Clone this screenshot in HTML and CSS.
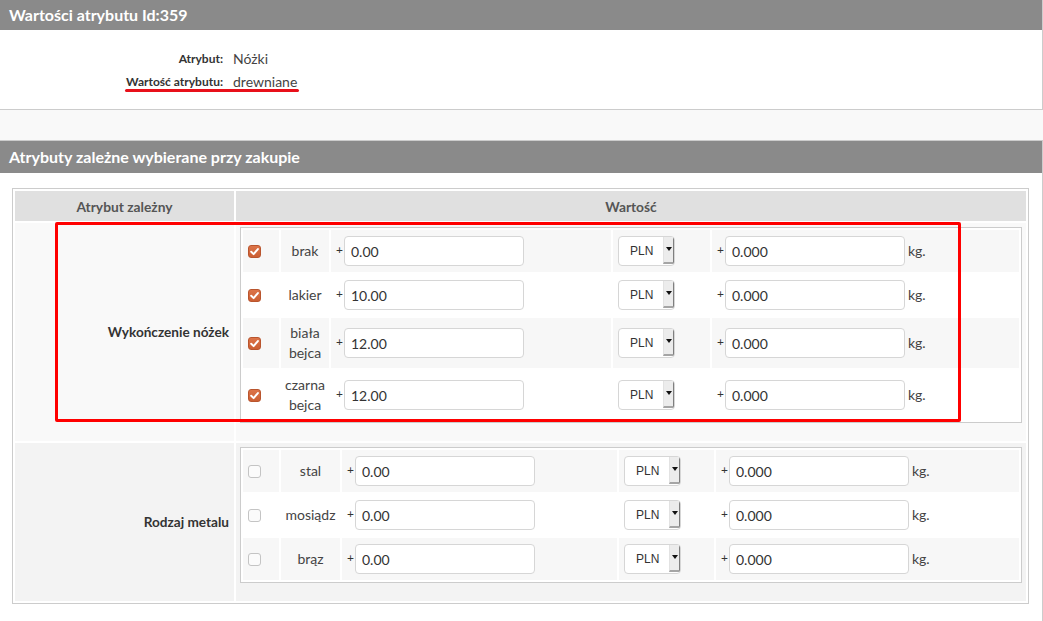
FILE: index.html
```html
<!DOCTYPE html>
<html lang="pl">
<head>
<meta charset="utf-8">
<title>Wartości atrybutu</title>
<link rel="stylesheet" href="styles.css">
</head>
<body>
<section class="panel panel-first">
  <h2 class="panel-head">Wartości atrybutu Id:359</h2>
  <div class="panel-body info">
    <div class="info-label">Atrybut:</div><div class="info-value">Nóżki</div>
    <div class="info-label">Wartość atrybutu:</div><div class="info-value">drewniane</div>
    <span class="mark-underline"></span>
  </div>
</section>

<section class="panel panel-second">
  <h2 class="panel-head panel-head-tall">Atrybuty zależne wybierane przy zakupie</h2>
  <div class="panel-body deps-wrap">
    <table class="deps">
      <colgroup><col class="col-name"><col></colgroup>
      <thead>
        <tr><th>Atrybut zależny</th><th>Wartość</th></tr>
      </thead>
      <tbody>
        <tr class="dep-row dep-row-a">
          <td class="dep-name">Wykończenie nóżek</td>
          <td class="dep-values">
            <table class="opts">
              <colgroup><col class="c-cb"><col class="c-lbl-a"><col class="c-price-a"><col class="c-sel-a"><col></colgroup>
              <tr>
                <td class="cell-cb"><span class="cb cb-on"><svg viewBox="0 0 13 13" width="13" height="13"><path d="M3.2 6.8 L5.6 9.1 L9.9 4.1" fill="none" stroke="#fff" stroke-width="2" stroke-linecap="round" stroke-linejoin="round"/></svg></span></td>
                <td class="cell-lbl">brak</td>
                <td><div class="fld"><span class="plus">+</span><input class="txt" type="text" value="0.00"></div></td>
                <td><div class="sel"><span class="sel-text">PLN</span><span class="sel-btn"><span class="tri"></span></span></div></td>
                <td><div class="fld"><span class="plus">+</span><input class="txt" type="text" value="0.000"><span class="unit">kg.</span></div></td>
              </tr>
              <tr>
                <td class="cell-cb"><span class="cb cb-on"><svg viewBox="0 0 13 13" width="13" height="13"><path d="M3.2 6.8 L5.6 9.1 L9.9 4.1" fill="none" stroke="#fff" stroke-width="2" stroke-linecap="round" stroke-linejoin="round"/></svg></span></td>
                <td class="cell-lbl">lakier</td>
                <td><div class="fld"><span class="plus">+</span><input class="txt" type="text" value="10.00"></div></td>
                <td><div class="sel"><span class="sel-text">PLN</span><span class="sel-btn"><span class="tri"></span></span></div></td>
                <td><div class="fld"><span class="plus">+</span><input class="txt" type="text" value="0.000"><span class="unit">kg.</span></div></td>
              </tr>
              <tr>
                <td class="cell-cb"><span class="cb cb-on"><svg viewBox="0 0 13 13" width="13" height="13"><path d="M3.2 6.8 L5.6 9.1 L9.9 4.1" fill="none" stroke="#fff" stroke-width="2" stroke-linecap="round" stroke-linejoin="round"/></svg></span></td>
                <td class="cell-lbl">biała bejca</td>
                <td><div class="fld"><span class="plus">+</span><input class="txt" type="text" value="12.00"></div></td>
                <td><div class="sel"><span class="sel-text">PLN</span><span class="sel-btn"><span class="tri"></span></span></div></td>
                <td><div class="fld"><span class="plus">+</span><input class="txt" type="text" value="0.000"><span class="unit">kg.</span></div></td>
              </tr>
              <tr>
                <td class="cell-cb"><span class="cb cb-on"><svg viewBox="0 0 13 13" width="13" height="13"><path d="M3.2 6.8 L5.6 9.1 L9.9 4.1" fill="none" stroke="#fff" stroke-width="2" stroke-linecap="round" stroke-linejoin="round"/></svg></span></td>
                <td class="cell-lbl">czarna bejca</td>
                <td><div class="fld"><span class="plus">+</span><input class="txt" type="text" value="12.00"></div></td>
                <td><div class="sel"><span class="sel-text">PLN</span><span class="sel-btn"><span class="tri"></span></span></div></td>
                <td><div class="fld"><span class="plus">+</span><input class="txt" type="text" value="0.000"><span class="unit">kg.</span></div></td>
              </tr>
            </table>
          </td>
        </tr>
        <tr class="dep-row dep-row-b">
          <td class="dep-name">Rodzaj metalu</td>
          <td class="dep-values">
            <table class="opts">
              <colgroup><col class="c-cb"><col class="c-lbl-b"><col class="c-price-b"><col class="c-sel-b"><col></colgroup>
              <tr>
                <td class="cell-cb"><span class="cb"></span></td>
                <td class="cell-lbl">stal</td>
                <td><div class="fld"><span class="plus">+</span><input class="txt" type="text" value="0.00"></div></td>
                <td><div class="sel"><span class="sel-text">PLN</span><span class="sel-btn"><span class="tri"></span></span></div></td>
                <td><div class="fld"><span class="plus">+</span><input class="txt" type="text" value="0.000"><span class="unit">kg.</span></div></td>
              </tr>
              <tr>
                <td class="cell-cb"><span class="cb"></span></td>
                <td class="cell-lbl">mosiądz</td>
                <td><div class="fld"><span class="plus">+</span><input class="txt" type="text" value="0.00"></div></td>
                <td><div class="sel"><span class="sel-text">PLN</span><span class="sel-btn"><span class="tri"></span></span></div></td>
                <td><div class="fld"><span class="plus">+</span><input class="txt" type="text" value="0.000"><span class="unit">kg.</span></div></td>
              </tr>
              <tr>
                <td class="cell-cb"><span class="cb"></span></td>
                <td class="cell-lbl">brąz</td>
                <td><div class="fld"><span class="plus">+</span><input class="txt" type="text" value="0.00"></div></td>
                <td><div class="sel"><span class="sel-text">PLN</span><span class="sel-btn"><span class="tri"></span></span></div></td>
                <td><div class="fld"><span class="plus">+</span><input class="txt" type="text" value="0.000"><span class="unit">kg.</span></div></td>
              </tr>
            </table>
          </td>
        </tr>
      </tbody>
    </table>
  </div>
  <span class="mark-box"></span>
</section>
</body>
</html>
```

FILE: styles.css
```css
* { box-sizing: border-box; }
html, body { margin: 0; padding: 0; }
body {
  background: #f9f9f9;
  width: 1043px;
  font-family: Lato, "Noto Sans", "Liberation Sans", sans-serif;
  color: #333;
}

.panel {
  background: #fff;
  border-right: 1px solid #ccc;
}
.panel-first { border-bottom: 1px solid #ccc; }
.panel-second {
  margin-top: 30px;
  border-top: 1px solid #ccc;
  position: relative;
  padding-bottom: 20px;
}

.panel-head {
  margin: 0;
  height: 30px;
  line-height: 30px;
  padding-left: 9px;
  background: #8a8a8a;
  color: #fff;
  font-size: 16px;
  font-weight: 700;
}
.panel-head-tall { height: 32px; line-height: 32px; }

/* info block */
.info {
  position: relative;
  display: grid;
  grid-template-columns: 223px auto;
  grid-auto-rows: 23px;
  align-items: center;
  padding: 17px 0 16px;
}
.info-label {
  text-align: right;
  font-size: 12px;
  font-weight: 700;
  color: #333;
}
.info-value {
  padding-left: 10px;
  font-size: 14px;
  color: #444;
}
.mark-underline {
  position: absolute;
  left: 125px;
  top: 59px;
  width: 174px;
  height: 3px;
  border-radius: 2px;
  background: #e8101a;
}

/* dependencies table */
.deps-wrap { padding: 15px 0 0 12px; }
.deps {
  width: 1017px;
  border: 1px solid #ccc;
  border-spacing: 2px;
  table-layout: fixed;
  background: #fff;
}
.col-name { width: 219px; }
.deps th {
  height: 30px;
  padding: 0;
  background: #e0e0e0;
  color: #555;
  font-size: 13.8px;
  font-weight: 700;
  text-align: center;
}
.dep-row-a > td { background: #f9f9f9; }
.dep-row-b > td { background: #f3f3f3; }
.dep-name {
  text-align: right;
  vertical-align: middle;
  padding: 0 5px 0 0;
  font-size: 13.6px;
  font-weight: 700;
  color: #333;
}
.dep-values {
  vertical-align: top;
  padding: 4px 4px 0;
}

.opts {
  width: 100%;
  margin-bottom: 18px;
  border: 1px solid #ccc;
  border-spacing: 2px;
  table-layout: fixed;
  background: #fff;
}
.c-cb { width: 36px; }
.c-lbl-a { width: 48px; }
.c-price-a { width: 280px; }
.c-sel-a { width: 97px; }
.c-lbl-b { width: 59px; }
.c-price-b { width: 275px; }
.c-sel-b { width: 95px; }

.opts td {
  padding: 6px 5px;
  vertical-align: middle;
  font-size: 14px;
  color: #444;
}
.opts tr:nth-child(odd) td { background: #f7f7f7; }
.opts tr:nth-child(even) td { background: #fff; }
.opts td.cell-lbl {
  padding: 5px 2px;
  text-align: center;
  line-height: 20px;
}

.cb {
  display: block;
  width: 13px;
  height: 13px;
  border: 1px solid #c4c4c4;
  border-radius: 3px;
  background: #fbfbfb;
}
.cb svg { display: block; margin: -1px; }
.cb-on {
  border-color: #b9552e;
  background: linear-gradient(#dc7449, #cc5f33);
}

.fld {
  display: flex;
  align-items: center;
  white-space: nowrap;
}
.plus {
  font-size: 12px;
  color: #333;
  margin: -3px 1px 0 0;
}
.txt {
  width: 180px;
  height: 30px;
  margin: 0;
  padding: 0 6px;
  border: 1px solid #d6d6d6;
  border-radius: 4px;
  background: #fff;
  font-family: Lato, "Noto Sans", "Liberation Sans", sans-serif;
  font-size: 14px;
  color: #333;
  outline: none;
}
.unit {
  margin-left: 3px;
  margin-top: -2px;
  font-size: 14px;
  color: #444;
}

.sel {
  display: flex;
  width: 57px;
  height: 30px;
  border: 1px solid #d6d6d6;
  border-radius: 4px;
  background: #fff;
  overflow: hidden;
}
.sel-text {
  flex: 1;
  padding-left: 11px;
  line-height: 29px;
  font-family: "Liberation Sans", Arial, sans-serif;
  font-size: 12px;
  color: #333;
}
.sel-btn {
  display: flex;
  align-items: center;
  justify-content: center;
  width: 12px;
  margin: 0 -1px 1px 0;
  background: #ececec;
  border-left: 1px solid #e2e2e2;
  border-right: 2px solid #7f7f7f;
  border-bottom: 2px solid #a5a5a5;
}
.tri {
  width: 0;
  height: 0;
  border-left: 3px solid transparent;
  border-right: 3px solid transparent;
  border-top: 4px solid #111;
  margin-top: -2px;
}

.mark-box {
  position: absolute;
  left: 55px;
  top: 81px;
  width: 906px;
  height: 200px;
  border: 3px solid #ff0000;
  border-radius: 2px;
  pointer-events: none;
}
```
